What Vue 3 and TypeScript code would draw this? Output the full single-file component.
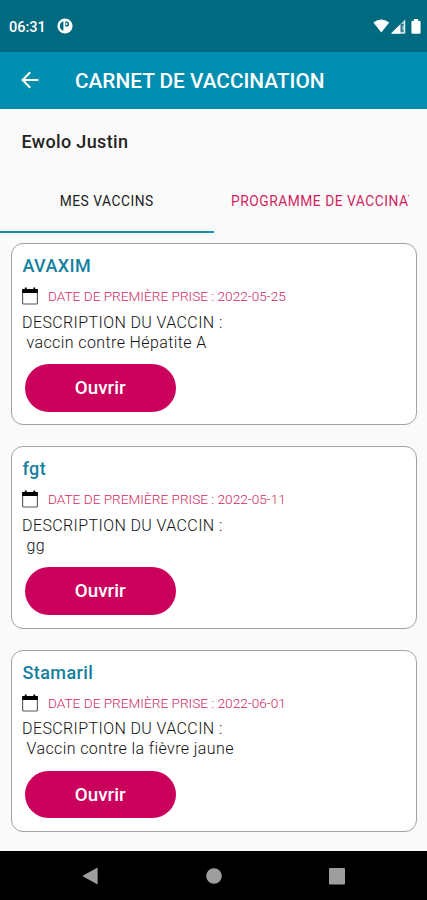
<script setup lang="ts">
interface Vaccine {
  name: string
  date: string
  description: string
}

const vaccines: Vaccine[] = [
  { name: 'AVAXIM', date: '2022-05-25', description: 'vaccin contre Hépatite A' },
  { name: 'fgt', date: '2022-05-11', description: 'gg' },
  { name: 'Stamaril', date: '2022-06-01', description: 'Vaccin contre la fièvre jaune' },
]
</script>

<template>
  <div class="screen">
    <div class="status">
      <span class="clock">06:31</span>
      <svg class="app-badge" width="16" height="16" viewBox="0 0 16 16">
        <circle cx="8" cy="8" r="7.6" fill="#fff" />
        <path d="M6.4 3.2A5 5 0 0 0 6.4 12.8z" fill="#006a80" />
        <path d="M8.3 3.4h1.2a2.6 2.6 0 0 1 0 5.2H8.3z" fill="#006a80" />
        <circle cx="9.6" cy="6" r="1" fill="#fff" />
      </svg>
      <svg class="wifi" width="17" height="14" viewBox="0 0 17 14">
        <path d="M0.4 3.6Q8.3-2.7 16.2 3.6L8.3 13.6z" fill="#fff" />
      </svg>
      <svg class="signal" width="15" height="15" viewBox="0 0 15 15">
        <path d="M0 14.6L14.2 0.6V14.6z" fill="#a9cbd3" />
        <path d="M0 14.6L9 5.7V14.6z" fill="#fff" />
        <path d="M12.6 5.8H10.6V12H12.6" fill="none" stroke="#286f80" stroke-width="1.6" />
        <path d="M1 14H13.6V1.6" fill="none" stroke="#e9f3f5" stroke-width="1" />
      </svg>
      <svg class="battery" width="10" height="15" viewBox="0 0 10 15">
        <path d="M3 0h4v1.7h1.4Q9.6 1.7 9.6 3v10.4Q9.6 14.7 8.4 14.7H1.6Q.4 14.7.4 13.4V3Q.4 1.7 1.6 1.7H3z" fill="#fff" />
      </svg>
    </div>

    <header class="toolbar">
      <svg class="back" width="18" height="18" viewBox="0 0 18 18">
        <path d="M9.2 1.2L1.6 9l7.6 7.8M1.8 9H17.4" fill="none" stroke="#fff" stroke-width="2" />
      </svg>
      <h1>CARNET DE VACCINATION</h1>
    </header>

    <div class="patient">Ewolo Justin</div>

    <nav class="tabs">
      <div class="tab active"><span>MES VACCINS</span></div>
      <div class="tab next"><span>PROGRAMME DE VACCINAT</span></div>
    </nav>

    <main class="list">
      <article v-for="v in vaccines" :key="v.name" class="card">
        <h2>{{ v.name }}</h2>
        <div class="date-row">
          <svg width="16" height="18" viewBox="0 0 16 18">
            <rect x="0.6" y="2.6" width="14.8" height="14.4" rx="1" fill="#fff" stroke="#555" stroke-width="1.1" />
            <path d="M0.2 2h15.6v4H0.2zM2.8 0.4h1.8V3H2.8zM11.4 0.4h1.8V3h-1.8z" fill="#000" />
          </svg>
          <span class="date">DATE DE PREMIÈRE PRISE : {{ v.date }}</span>
        </div>
        <div class="label">DESCRIPTION DU VACCIN :</div>
        <div class="description">{{ v.description }}</div>
        <button type="button">Ouvrir</button>
      </article>
    </main>

    <footer class="navbar">
      <svg width="16" height="18" viewBox="0 0 16 18"><path d="M0.3 9L15.6 0.4V17.6z" fill="#9e9e9e" /></svg>
      <svg width="16" height="18" viewBox="0 0 16 18"><circle cx="8" cy="9" r="7.8" fill="#9e9e9e" /></svg>
      <svg width="16" height="18" viewBox="0 0 16 18"><rect y="1" width="16" height="16.4" rx="1" fill="#9e9e9e" /></svg>
    </footer>
  </div>
</template>

<style>
body {
  margin: 0;
}
</style>

<style scoped>
.screen {
  width: 427px;
  height: 900px;
  display: flex;
  flex-direction: column;
  overflow: hidden;
  background: #fafafa;
  font-family: Roboto, "Liberation Sans", sans-serif;
  color: #222;
  white-space: nowrap;
}
svg {
  display: block;
  flex: none;
}
.status {
  box-sizing: border-box;
  height: 51.5px;
  flex: none;
  display: flex;
  align-items: center;
  padding: 1px 6px 0 9px;
  background: #006a80;
  color: #fff;
}
.clock {
  width: 48px;
  padding-top: 2px;
  font-size: 14.5px;
  font-weight: 500;
}
.wifi {
  margin-left: auto;
}
.signal {
  margin-left: 1px;
}
.battery {
  margin-left: 5px;
}
.toolbar {
  height: 57.5px;
  flex: none;
  display: flex;
  align-items: center;
  padding-left: 21px;
  background: #008eb0;
  color: #fff;
}
h1 {
  margin: 0 0 0 36px;
  padding-top: 2px;
  font-size: 20.8px;
  font-weight: 500;
}
.patient {
  height: 65px;
  flex: none;
  padding-left: 21.5px;
  font-size: 18px;
  font-weight: 500;
  line-height: 65px;
  letter-spacing: 0.34px;
}
.tabs {
  height: 59px;
  flex: none;
  display: grid;
  grid-template-columns: 213.5px 213.5px;
}
.tab {
  box-sizing: border-box;
  line-height: 54px;
  font-size: 13.8px;
  letter-spacing: 0.52px;
}
.active {
  text-align: center;
  border-bottom: 2px solid #168fb0;
}
.next {
  padding: 0 17px 0 17.5px;
  color: #cf1f60;
}
.next span {
  display: block;
  width: 178px;
  overflow: hidden;
}
.list {
  flex: 1;
  display: flex;
  flex-direction: column;
  gap: 21px;
  padding: 10.2px 10px 0 11px;
}
.card {
  box-sizing: border-box;
  height: 182.2px;
  flex: none;
  display: flex;
  flex-direction: column;
  align-items: flex-start;
  padding: 10px 10px 0;
  border: 1px solid #a2a2a2;
  border-radius: 12px;
  background: #fff;
}
h2 {
  margin: 0 0 0 0.5px;
  font-size: 18px;
  line-height: 24px;
  font-weight: 500;
  letter-spacing: 0.4px;
  color: #1480a0;
}
.date-row {
  height: 36px;
  display: flex;
  align-items: center;
  gap: 10px;
}
.date {
  font-size: 13.65px;
  font-weight: 300;
  color: #cf2860;
}
.label,
.description {
  font-size: 16px;
  line-height: 20px;
  font-weight: 300;
  letter-spacing: 0.4px;
  color: #111;
}
.label {
  margin-top: -1.2px;
}
.description {
  padding-left: 4.5px;
}
button {
  width: 151.5px;
  height: 47.5px;
  margin: 11.3px 0 0 2.5px;
  padding: 0.5px 0 0;
  border: 0;
  border-radius: 24px;
  background: #cb005d;
  color: #fff;
  font: 500 18.8px Roboto, "Liberation Sans", sans-serif;
}
.navbar {
  height: 49px;
  flex: none;
  display: flex;
  align-items: center;
  gap: 107.5px;
  padding-left: 82px;
  background: #000;
}
</style>
